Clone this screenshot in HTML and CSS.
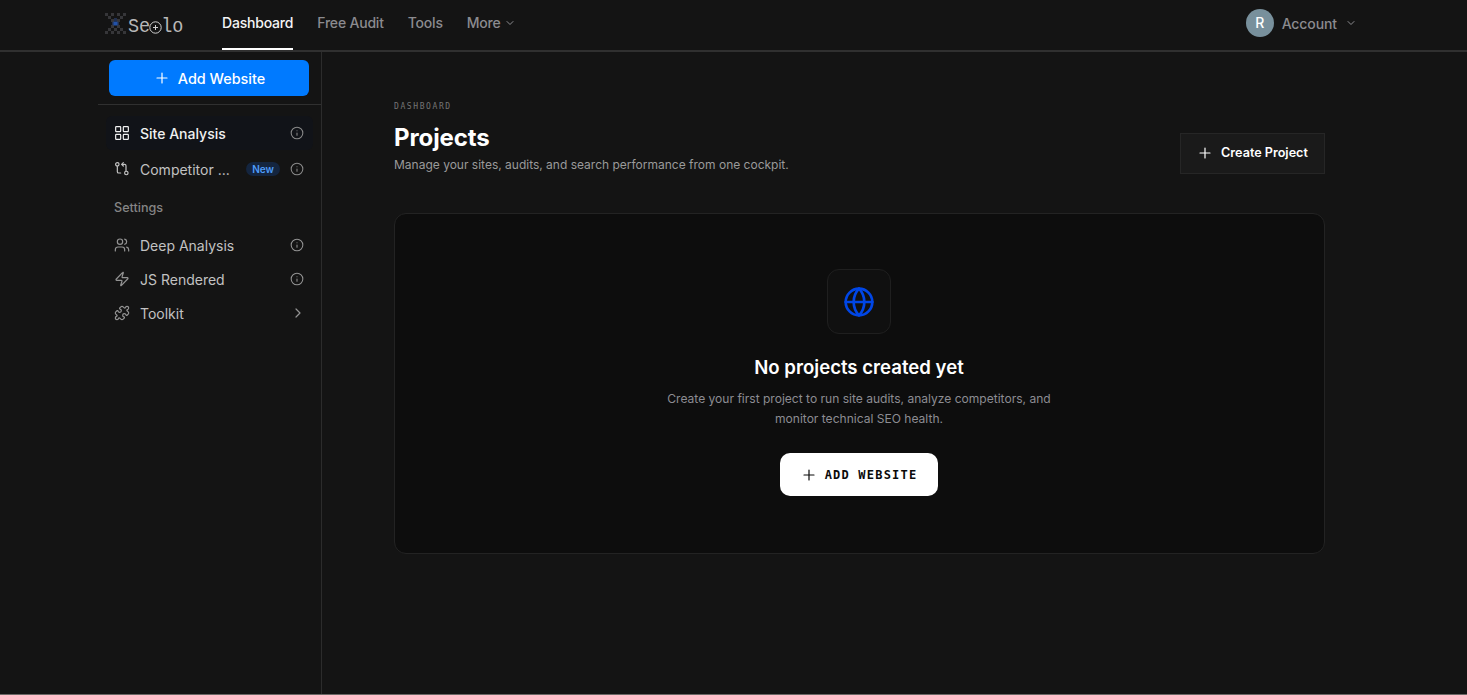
FILE: index.html
```html
<!DOCTYPE html>
<html lang="en">

<head>
    <meta charset="UTF-8" />
    <meta name="viewport" content="width=device-width, initial-scale=1.0" />
    <title>Seolo - Projects</title>
    <link rel="stylesheet" href="styles.css">
</head>

<body>
    <svg class="sprite" aria-hidden="true">
        <symbol id="plus" viewBox="0 0 24 24"><path d="M4.5 12h15M12 4.5v15" /></symbol>
        <symbol id="chevron-down" viewBox="0 0 24 24"><path d="m6 9 6 6 6-6" /></symbol>
        <symbol id="chevron-right" viewBox="0 0 24 24"><path d="m9 18 6-6-6-6" /></symbol>
        <symbol id="info" viewBox="0 0 24 24"><circle cx="12" cy="12" r="10" /><path d="M12 16v-4M12 8h.01" /></symbol>
    </svg>

    <header class="topbar">
        <a class="logo" href="#">
            <svg class="logo-mark" viewBox="0 0 21 21">
                <path class="dim" d="M0 0h3v3h-3zM6 0h3v3h-3zM12 0h3v3h-3zM18 0h3v3h-3zM3 3h3v3h-3zM15 3h3v3h-3zM6 6h3v3h-3zM12 6h3v3h-3zM6 12h3v3h-3zM12 12h3v3h-3zM3 15h3v3h-3zM9 15h3v3h-3zM15 15h3v3h-3zM0 18h3v3h-3zM6 18h3v3h-3zM12 18h3v3h-3zM18 18h3v3h-3z" />
                <path class="navy" d="M9 5h3v3h-3zM7 9h7v3h-7z" />
                <path class="blue" d="M8.5 8.5h4v4h-4z" />
            </svg>
            <span class="logo-text"><span>Se</span><svg class="logo-o" viewBox="0 0 13 13"><circle cx="6.5" cy="6.5" r="5.7" /><path d="M6.5 4v5M4 6.5h5" /></svg><span>lo</span></span>
        </a>
        <nav class="topnav">
            <a class="active" href="#">Dashboard</a>
            <a href="#">Free Audit</a>
            <a href="#">Tools</a>
            <a href="#">More <svg class="icon chev"><use href="#chevron-down" /></svg></a>
        </nav>
        <div class="account">
            <span class="avatar">R</span>
            <span>Account</span>
            <svg class="icon chev"><use href="#chevron-down" /></svg>
        </div>
    </header>

    <div class="layout">
        <aside class="sidebar">
            <div class="sidebar-top">
                <button class="add-btn"><svg class="icon"><use href="#plus" /></svg>Add Website</button>
            </div>
            <ul class="menu">
                <li class="active">
                    <svg class="icon" viewBox="0 0 24 24"><rect x="2.5" y="2.5" width="7.5" height="7.5" rx="1" /><rect x="14" y="2.5" width="7.5" height="7.5" rx="1" /><rect x="14" y="14" width="7.5" height="7.5" rx="1" /><rect x="2.5" y="14" width="7.5" height="7.5" rx="1" /></svg>
                    <span class="label">Site Analysis</span>
                    <svg class="icon info"><use href="#info" /></svg>
                </li>
                <li>
                    <svg class="icon" viewBox="0 0 24 24"><circle cx="5" cy="5" r="2.6" /><path d="M5 8v8a2 2 0 0 0 2 2h3" /><path d="M12 5h4a2 2 0 0 1 2 2v8" /><path d="m14 2.5-2.5 2.5 2.5 2.5" /><circle cx="18.5" cy="18" r="2.6" /></svg>
                    <span class="label">Competitor ...</span>
                    <span class="badge">New</span>
                    <svg class="icon info"><use href="#info" /></svg>
                </li>
            </ul>
            <h2 class="menu-title">Settings</h2>
            <ul class="menu settings">
                <li>
                    <svg class="icon" viewBox="0 0 24 24"><path d="M16 21v-2a4 4 0 0 0-4-4H6a4 4 0 0 0-4 4v2" /><circle cx="9" cy="7" r="4" /><path d="M22 21v-2a4 4 0 0 0-3-3.87M16 3.13a4 4 0 0 1 0 7.75" /></svg>
                    <span class="label">Deep Analysis</span>
                    <svg class="icon info"><use href="#info" /></svg>
                </li>
                <li>
                    <svg class="icon" viewBox="0 0 24 24"><path d="M4 14a1 1 0 0 1-.78-1.63l9.9-10.2a.5.5 0 0 1 .86.46l-1.92 6.02A1 1 0 0 0 13 10h7a1 1 0 0 1 .78 1.63l-9.9 10.2a.5.5 0 0 1-.86-.46l1.92-6.02A1 1 0 0 0 11 14z" /></svg>
                    <span class="label">JS Rendered</span>
                    <svg class="icon info"><use href="#info" /></svg>
                </li>
                <li>
                    <svg class="icon" viewBox="0 0 24 24"><path d="M15.39 4.39a1 1 0 0 0 1.68-.474 2.5 2.5 0 1 1 3.014 3.015 1 1 0 0 0-.474 1.68l1.683 1.682a2.414 2.414 0 0 1 0 3.414L19.61 15.39a1 1 0 0 1-1.68-.474 2.5 2.5 0 1 0-3.014 3.015 1 1 0 0 1 .474 1.68l-1.683 1.682a2.414 2.414 0 0 1-3.414 0L8.61 19.61a1 1 0 0 0-1.68.474 2.5 2.5 0 1 1-3.014-3.015 1 1 0 0 0 .474-1.68l-1.683-1.682a2.414 2.414 0 0 1 0-3.414L4.39 8.61a1 1 0 0 1 1.68.474 2.5 2.5 0 1 0 3.014-3.015 1 1 0 0 1-.474-1.68l1.683-1.682a2.414 2.414 0 0 1 3.414 0z" /></svg>
                    <span class="label">Toolkit</span>
                    <svg class="icon arrow"><use href="#chevron-right" /></svg>
                </li>
            </ul>
        </aside>

        <main class="content">
            <div class="page-head">
                <div>
                    <div class="eyebrow">DASHBOARD</div>
                    <h1>Projects</h1>
                    <p>Manage your sites, audits, and search performance from one cockpit.</p>
                </div>
                <button class="create-btn"><svg class="icon"><use href="#plus" /></svg>Create Project</button>
            </div>

            <section class="empty">
                <div class="empty-icon">
                    <svg class="icon" viewBox="0 0 24 24"><circle cx="12" cy="12" r="10" /><path d="M12 2a14.5 14.5 0 0 0 0 20 14.5 14.5 0 0 0 0-20M2 12h20" /></svg>
                </div>
                <h3>No projects created yet</h3>
                <p>Create your first project to run site audits, analyze competitors, and monitor technical SEO health.</p>
                <button class="white-btn"><svg class="icon"><use href="#plus" /></svg>ADD WEBSITE</button>
            </section>
        </main>
    </div>
</body>

</html>
```

FILE: styles.css
```css
* {
    box-sizing: border-box;
}

body {
    margin: 0;
    height: 100vh;
    display: flex;
    flex-direction: column;
    background: #141414;
    border-bottom: 1px solid #6b6866;
    color: #fff;
    font-family: Inter, "Liberation Sans", sans-serif;
    overflow: hidden;
}

h1, h2, h3, p, ul {
    margin: 0;
    padding: 0;
}

a {
    color: inherit;
    text-decoration: none;
}

button {
    display: flex;
    align-items: center;
    justify-content: center;
    font-family: inherit;
    color: inherit;
    padding: 0;
    white-space: nowrap;
}

.sprite {
    display: none;
}

.icon {
    width: 16px;
    height: 16px;
    flex: none;
    fill: none;
    stroke: currentColor;
    stroke-width: 1.8;
    stroke-linecap: round;
    stroke-linejoin: round;
}

/* top bar */
.topbar {
    display: flex;
    flex: none;
    height: 52px;
    padding: 0 110px 0 105px;
    border-bottom: 2px solid #303030;
    color: #8b8b8f;
    font-size: 14px;
    font-weight: 500;
    letter-spacing: -0.2px;
}

.logo {
    display: flex;
    width: 117px;
    padding-top: 13px;
}

.logo-mark {
    width: 21px;
    height: 21px;
    margin-right: 2px;
}

.logo-mark .dim {
    fill: #363639;
}

.logo-mark .navy {
    fill: #22304f;
}

.logo-mark .blue {
    fill: #2352a8;
}

.logo-text {
    display: flex;
    height: 25px;
    align-items: center;
    color: #b8b8b8;
    font-family: "Liberation Mono", monospace;
    font-size: 18.5px;
    font-weight: 400;
    letter-spacing: 0;
}

.logo-text span {
    padding-top: 1px;
    transform: scaleY(1.12);
}

.logo-o {
    width: 13px;
    height: 13px;
    margin: 4px -1px 0;
    fill: none;
    stroke: #d0d0d0;
}

.topnav {
    display: flex;
    gap: 24px;
}

.topnav a {
    display: flex;
    align-items: center;
    height: 50px;
    padding-bottom: 3px;
    border-bottom: 2px solid transparent;
}

.topnav .active {
    color: #f4f4f4;
    border-color: #fff;
}

.chev {
    width: 12px;
    height: 12px;
    margin: 1px 0 0 3px;
    stroke-width: 2;
}

.account {
    display: flex;
    align-items: center;
    height: 46px;
    margin-left: auto;
    letter-spacing: -0.1px;
}

.avatar {
    width: 28px;
    height: 28px;
    margin-right: 8px;
    border-radius: 50%;
    background: #78909c;
    color: #fff;
    line-height: 28px;
    text-align: center;
}

.account .chev {
    margin: 0 0 0 8px;
}

.layout {
    display: flex;
    flex: 1;
    min-height: 0;
}

/* sidebar */
.sidebar {
    width: 224px;
    margin-left: 98px;
    flex: none;
    border-right: 1px solid #2c2c2c;
}

.sidebar-top {
    height: 53px;
    padding: 8px 12px 0 11px;
    border-bottom: 1px solid #303030;
}

.add-btn {
    width: 100%;
    height: 36px;
    gap: 8px;
    padding: 0 0 0 1px;
    border: 0;
    border-radius: 6px;
    background: #007aff;
    font-size: 14.4px;
    font-weight: 500;
}

.menu {
    list-style: none;
    padding: 11px 8px 0 8px;
}

.menu li {
    display: flex;
    align-items: center;
    height: 34px;
    margin-bottom: 2px;
    padding: 0 9px 0 8px;
    border-radius: 6px;
    color: #c2c2c2;
    font-size: 14px;
}

.menu li.active {
    background: #111318;
    color: #f0f0f0;
    font-weight: 500;
}

.label {
    flex: 1;
    margin-left: 10px;
    white-space: nowrap;
}

.badge {
    margin-right: 10px;
    padding: 0 6px;
    border-radius: 7px;
    background: #14253f;
    color: #4f9cf9;
    font-size: 10px;
    font-weight: 600;
    line-height: 14px;
}

.menu .info {
    width: 14px;
    height: 14px;
    color: #8a8a8a;
}

.menu .arrow {
    margin-right: -2px;
}

.menu-title {
    padding: 10px 16px 0;
    color: #858585;
    font-size: 12.6px;
    font-weight: 500;
    line-height: 20px;
}

.settings {
    padding-top: 10px;
}

.settings li {
    height: 34px;
    margin: 0;
}

.settings li > .icon {
    color: #939393;
}

/* main content */
.content {
    width: 931px;
    margin-left: 72px;
    padding-top: 49px;
}

.page-head {
    display: flex;
    justify-content: space-between;
    height: 112px;
}

.eyebrow {
    color: #757575;
    font-family: "DejaVu Sans Mono", monospace;
    font-size: 8px;
    letter-spacing: 1.6px;
    line-height: 12px;
}

.page-head h1 {
    margin-top: 8px;
    font-size: 24px;
    line-height: 34px;
    letter-spacing: -0.1px;
}

.page-head p {
    color: #9a9a9a;
    font-size: 12px;
    line-height: 20px;
}

.create-btn {
    width: 145px;
    height: 41px;
    margin-top: 32px;
    gap: 8px;
    padding-bottom: 2px;
    border: 1px solid #262626;
    background: #1a1a1a;
    font-size: 12.6px;
    font-weight: 600;
}

.empty {
    display: flex;
    flex-direction: column;
    align-items: center;
    height: 341px;
    padding: 55px 1px 0 0;
    border: 1px solid #232323;
    border-radius: 12px;
    background: #0d0d0d;
}

.empty-icon {
    display: flex;
    align-items: center;
    justify-content: center;
    width: 64px;
    height: 65px;
    border: 1px solid #1f1f1f;
    border-radius: 12px;
    background: #101010;
    color: #0046e6;
}

.empty-icon .icon {
    width: 32px;
    height: 32px;
    stroke-width: 2;
}

.empty h3 {
    margin-top: 19px;
    font-size: 18.6px;
    font-weight: 600;
    line-height: 28px;
}

.empty p {
    width: 400px;
    margin-top: 8px;
    color: #8c8c92;
    font-size: 12.05px;
    line-height: 20px;
    text-align: center;
}

.white-btn {
    width: 158px;
    height: 43px;
    margin-top: 24px;
    gap: 8px;
    border: 0;
    border-radius: 10px;
    background: #fff;
    color: #0a0a0a;
    font-family: "DejaVu Sans Mono", monospace;
    font-size: 12px;
    font-weight: 700;
    letter-spacing: 1.2px;
}
```
